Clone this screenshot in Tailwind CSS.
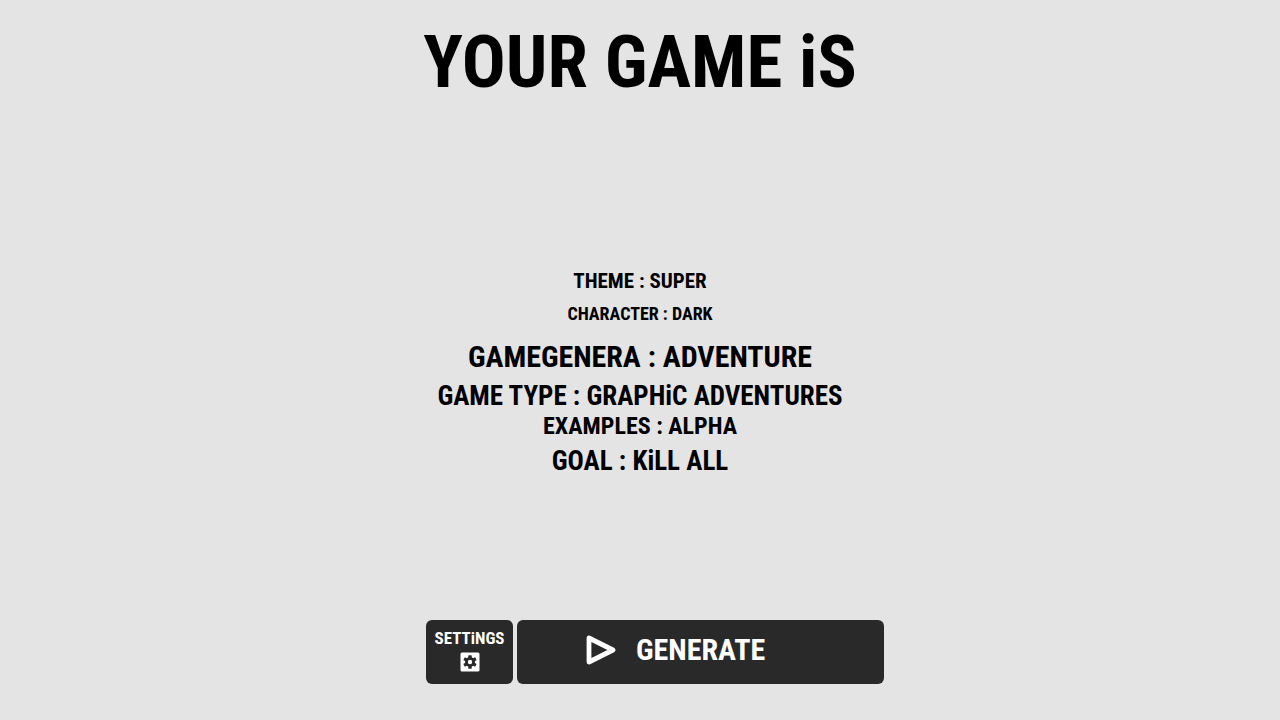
<!DOCTYPE html>
<html lang="en">
<head>
  <meta charset="UTF-8" />
  <meta name="viewport" content="width=device-width, initial-scale=1.0"/>
  <title>Game Generator</title>
  <script src="https://cdn.jsdelivr.net/npm/@tailwindcss/browser@4"></script>
</head>
<body class="bg-[#e4e4e4] text-black min-h-screen flex flex-col items-center font-bold font-['Roboto_Condensed','Lato',sans-serif]">
  <h1 class="pt-5 pb-5 text-[73px] leading-[84px] text-center">YOUR GAME iS</h1>

  <!-- Generated idea -->
  <main class="flex-1 flex flex-col justify-center pt-0.5 text-center">
    <p class="text-[21px] leading-[30px]">THEME : SUPER</p>
    <p class="text-[18px] leading-[36px]">CHARACTER : DARK</p>
    <p class="text-[30px] leading-[50px]">GAMEGENERA : ADVENTURE</p>
    <p class="text-[27px] leading-[28px]">GAME TYPE : GRAPHiC ADVENTURES</p>
    <p class="text-[24px] leading-[32px]">EXAMPLES : ALPHA</p>
    <p class="text-[27px] leading-[38px]">GOAL : KiLL ALL</p>
  </main>

  <!-- Buttons -->
  <footer class="flex gap-1 pl-[30px] pb-9 text-white">
    <button type="button" class="w-[87px] h-16 flex flex-col items-center pt-1.5 gap-0.5 rounded-md bg-[#292929] text-[17px] leading-[24px]">
      SETTiNGS
      <svg class="w-5 h-5" viewBox="0 0 20 20" aria-hidden="true">
        <rect x="0.5" y="0.5" width="19" height="19" rx="1.5" fill="#fff"/>
        <g fill="#292929">
          <circle cx="10" cy="10" r="5"/>
          <rect x="8.3" y="3.2" width="3.4" height="13.6" rx="0.5"/>
          <rect x="8.3" y="3.2" width="3.4" height="13.6" rx="0.5" transform="rotate(60 10 10)"/>
          <rect x="8.3" y="3.2" width="3.4" height="13.6" rx="0.5" transform="rotate(120 10 10)"/>
        </g>
        <circle cx="10" cy="10" r="2.2" fill="#fff"/>
      </svg>
    </button>
    <button type="button" class="w-[367px] h-16 flex items-center pb-1 pl-[69px] gap-5 rounded-md bg-[#292929] text-[30px] leading-[32px]">
      <svg class="w-[30px] h-[30px]" viewBox="0 0 30 30" fill="none" stroke="#fff" stroke-width="4.8" stroke-linejoin="round" aria-hidden="true">
        <path d="M3 3v24L27 15z"/>
      </svg>
      GENERATE
    </button>
  </footer>
</body>
</html>
